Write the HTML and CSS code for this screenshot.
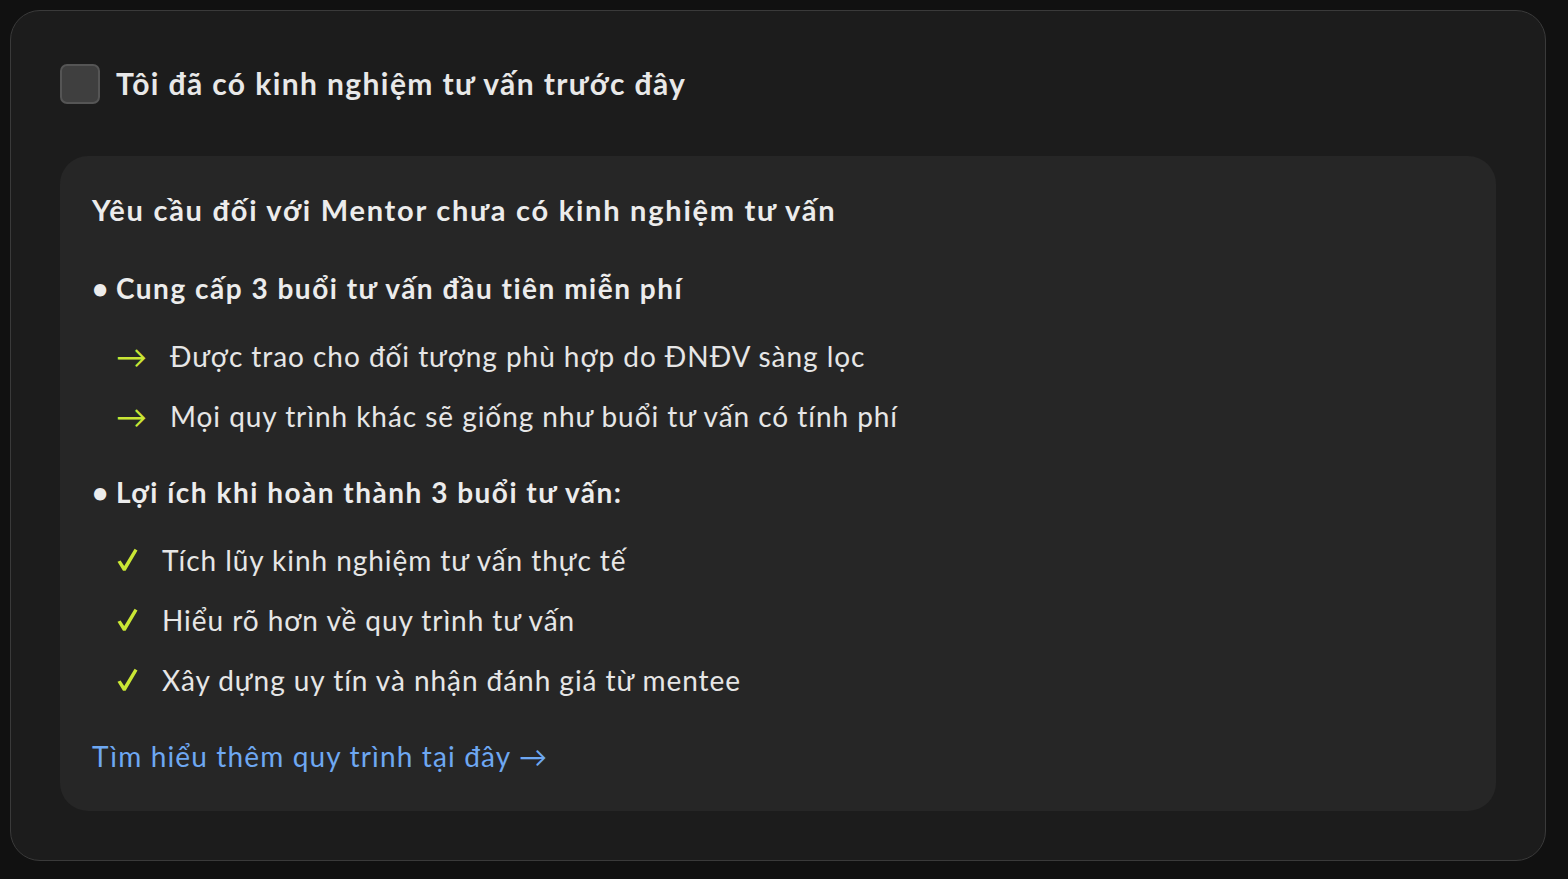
FILE: index.html
```html
<!DOCTYPE html>
<html lang="vi">
<head>
<meta charset="utf-8">
<title>Mentor</title>
<link rel="stylesheet" href="styles.css">
</head>
<body>
<div class="card">
  <label class="check-row">
    <span class="checkbox"></span>
    <span class="check-label">Tôi đã có kinh nghiệm tư vấn trước đây</span>
  </label>
  <div class="info">
    <h2 class="info-title">Yêu cầu đối với Mentor chưa có kinh nghiệm tư vấn</h2>
    <div class="bullet b1"><span class="dot">•</span>Cung cấp 3 buổi tư vấn đầu tiên miễn phí</div>
    <div class="sub s-first"><span class="arrow">→</span>Được trao cho đối tượng phù hợp do ĐNĐV sàng lọc</div>
    <div class="sub"><span class="arrow">→</span>Mọi quy trình khác sẽ giống như buổi tư vấn có tính phí</div>
    <div class="bullet b2"><span class="dot">•</span>Lợi ích khi hoàn thành 3 buổi tư vấn:</div>
    <div class="sub s-first"><span class="tick"><svg class="tick-svg" viewBox="0 0 21 24" width="21" height="24"><path d="M0.5 13.8 L3.6 12.4 L7.2 18 L17.6 0.8 L20.5 2.4 L8.6 22.8 L6 22.8 Z"/></svg></span>Tích lũy kinh nghiệm tư vấn thực tế</div>
    <div class="sub"><span class="tick"><svg class="tick-svg" viewBox="0 0 21 24" width="21" height="24"><path d="M0.5 13.8 L3.6 12.4 L7.2 18 L17.6 0.8 L20.5 2.4 L8.6 22.8 L6 22.8 Z"/></svg></span>Hiểu rõ hơn về quy trình tư vấn</div>
    <div class="sub"><span class="tick"><svg class="tick-svg" viewBox="0 0 21 24" width="21" height="24"><path d="M0.5 13.8 L3.6 12.4 L7.2 18 L17.6 0.8 L20.5 2.4 L8.6 22.8 L6 22.8 Z"/></svg></span>Xây dựng uy tín và nhận đánh giá từ mentee</div>
    <a class="link" href="#">Tìm hiểu thêm quy trình tại đây →</a>
  </div>
</div>
</body>
</html>
```
FILE: styles.css
```css
html, body {
  margin: 0;
  padding: 0;
  background: #111111;
}
body {
  padding: 10px 22px 18px 10px;
  font-family: Lato, "Noto Sans", sans-serif;
  color: #e6e6e6;
}
.card {
  background: #1c1c1c;
  border: 1.5px solid #3a3a3a;
  border-radius: 30px;
  padding: 53px 49px 49px 49px;
}
.check-row {
  display: flex;
  align-items: center;
  gap: 16px;
  height: 40px;
}
.checkbox {
  width: 36px;
  height: 36px;
  border: 2px solid #555555;
  background: #3f3f3f;
  border-radius: 7px;
  flex: none;
}
.check-label {
  font-size: 30px;
  font-weight: 700;
  color: #e8e8e8;
  line-height: 38px;
  letter-spacing: 1.4px;
  margin-top: -2px;
}
.info {
  margin-top: 52px;
  background: #262626;
  border-radius: 28px;
  padding: 34px 32px 35px 32px;
  display: flex;
  flex-direction: column;
  align-items: flex-start;
}
.info-title {
  margin: 0;
  font-size: 29px;
  font-weight: 700;
  line-height: 40px;
  color: #ececec;
  letter-spacing: 1.75px;
}
.bullet {
  font-size: 28px;
  font-weight: 700;
  line-height: 40px;
  color: #ececec;
  display: flex;
  letter-spacing: 1.5px;
}
.b1 { margin-top: 38px; }
.b2 { margin-top: 36px; }
.dot {
  width: 24px;
  flex: none;
  letter-spacing: 0;
}
.sub {
  font-size: 28px;
  line-height: 40px;
  margin-top: 20px;
  color: #e6e6e6;
  display: flex;
  padding-left: 24px;
  letter-spacing: 0.95px;
}
.s-first { margin-top: 28px; }
.arrow {
  color: #c9e635;
  width: 54px;
  flex: none;
  letter-spacing: 0;
  font-size: 31px;
}
.tick {
  width: 46px;
  flex: none;
  display: flex;
  align-items: center;
  padding-left: 1px;
  box-sizing: border-box;
}
.tick-svg {
  fill: #c9e635;
  display: block;
}
.link {
  margin-top: 36px;
  font-size: 28px;
  line-height: 40px;
  color: #6ea8f2;
  text-decoration: none;
  letter-spacing: 1.15px;
}
```
